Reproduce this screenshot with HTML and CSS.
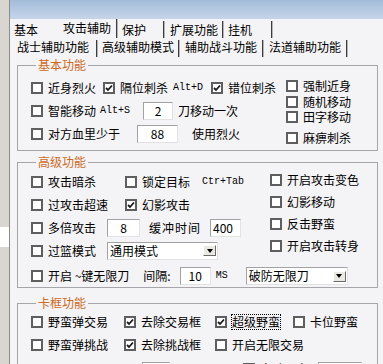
FILE: index.html
```html
<!DOCTYPE html>
<html lang="zh-CN">
<head>
    <meta charset="UTF-8">
    <title>攻击辅助</title>
    <link rel="stylesheet" href="styles.css">
</head>
<body>
    <div class="window">
        <div class="side">
            <div class="side-hole"></div>
        </div>
        <div class="main">
            <div class="titlebar"></div>

            <div class="tabs tabs-top">
                <span class="tab t1">基本</span>
                <span class="tab t2 active">攻击辅助</span>
                <span class="tab t3">保护</span>
                <span class="tab t4">扩展功能</span>
                <span class="tab t5">挂机</span>
            </div>

            <div class="tabs tabs-sub">
                <span class="tab active">战士辅助功能</span>
                <span class="tab">高级辅助模式</span>
                <span class="tab">辅助战斗功能</span>
                <span class="tab">法道辅助功能</span>
            </div>

            <div class="panel">
                <!-- 基本功能 -->
                <fieldset class="group basic">
                    <legend>基本功能</legend>
                    <div class="group-body">
                        <div class="rows">
                            <div class="row">
                                <label class="chk col-a"><span class="box"></span>近身烈火</label>
                                <span class="col-b">
                                    <label class="chk"><span class="box on"><svg viewBox="0 0 8 8"><polyline points="1,4 3,6 7,1.5"/></svg></span>隔位刺杀</label>
                                    <span class="key">Alt+D</span>
                                </span>
                                <label class="chk"><span class="box on"><svg viewBox="0 0 8 8"><polyline points="1,4 3,6 7,1.5"/></svg></span>错位刺杀</label>
                            </div>
                            <div class="row">
                                <label class="chk"><span class="box"></span>智能移动</label>
                                <span class="key alt-s">Alt+S</span>
                                <span class="num n-step">2</span>
                                <span class="txt t-step">刀移动一次</span>
                            </div>
                            <div class="row">
                                <label class="chk"><span class="box"></span>对方血里少于</label>
                                <span class="num n-hp">88</span>
                                <span class="txt t-hp">使用烈火</span>
                            </div>
                        </div>
                        <div class="side-col">
                            <label class="chk"><span class="box"></span>强制近身</label>
                            <label class="chk s2"><span class="box"></span>随机移动</label>
                            <label class="chk s3"><span class="box"></span>田字移动</label>
                            <label class="chk s4"><span class="box"></span>麻痹刺杀</label>
                        </div>
                    </div>
                </fieldset>

                <!-- 高级功能 -->
                <fieldset class="group adv">
                    <legend>高级功能</legend>
                    <div class="group-body">
                        <div class="rows">
                            <div class="row">
                                <label class="chk col-a"><span class="box"></span>攻击暗杀</label>
                                <label class="chk"><span class="box"></span>锁定目标</label>
                                <span class="key ctr-tab">Ctr+Tab</span>
                            </div>
                            <div class="row">
                                <label class="chk col-a"><span class="box"></span>过攻击超速</label>
                                <label class="chk"><span class="box on"><svg viewBox="0 0 8 8"><polyline points="1,4 3,6 7,1.5"/></svg></span>幻影攻击</label>
                            </div>
                            <div class="row">
                                <label class="chk"><span class="box"></span>多倍攻击</label>
                                <span class="num n-mult">8</span>
                                <span class="txt t-buf">缓冲时间</span>
                                <span class="num n-buf">400</span>
                            </div>
                            <div class="row">
                                <label class="chk"><span class="box"></span>过篮模式</label>
                                <span class="combo c-mode">通用模式<span class="arrow"></span></span>
                            </div>
                        </div>
                        <div class="side-col">
                            <label class="chk"><span class="box"></span>开启攻击变色</label>
                            <label class="chk"><span class="box"></span>幻影移动</label>
                            <label class="chk"><span class="box"></span>反击野蛮</label>
                            <label class="chk"><span class="box"></span>开启攻击转身</label>
                        </div>
                    </div>
                    <div class="row last">
                        <label class="chk"><span class="box"></span>开启 ~键无限刀</label>
                        <span class="txt t-gap">间隔:</span>
                        <span class="num n-gap">10</span>
                        <span class="key ms">MS</span>
                        <span class="combo c-blade">破防无限刀<span class="arrow"></span></span>
                    </div>
                </fieldset>

                <!-- 卡框功能 -->
                <fieldset class="group card">
                    <legend>卡框功能</legend>
                    <div class="row">
                        <label class="chk col-a"><span class="box"></span>野蛮弹交易</label>
                        <label class="chk col-b"><span class="box on"><svg viewBox="0 0 8 8"><polyline points="1,4 3,6 7,1.5"/></svg></span>去除交易框</label>
                        <label class="chk col-c"><span class="box on"><svg viewBox="0 0 8 8"><polyline points="1,4 3,6 7,1.5"/></svg></span><span class="focus">超级野蛮</span></label>
                        <label class="chk"><span class="box"></span>卡位野蛮</label>
                    </div>
                    <div class="row">
                        <label class="chk col-a"><span class="box"></span>野蛮弹挑战</label>
                        <label class="chk col-b"><span class="box on"><svg viewBox="0 0 8 8"><polyline points="1,4 3,6 7,1.5"/></svg></span>去除挑战框</label>
                        <label class="chk col-c"><span class="box"></span>开启无限交易</label>
                    </div>
                    <div class="row partial">
                        <span class="num n-low"></span>
                        <label class="chk c-low"><span class="box dark"></span>自动野蛮</label>
                        <span class="num n-low2"></span>
                    </div>
                </fieldset>
            </div>
        </div>
    </div>
</body>
</html>
```

FILE: styles.css
```css
html, body {
    margin: 0;
    width: 383px;
    height: 364px;
    overflow: hidden;
}

body {
    font-family: "Noto Sans CJK SC", "Noto Sans", sans-serif;
    font-size: 12px;
    line-height: 14px;
    color: #000;
    background: #f4f3f5;
}

.window {
    display: flex;
    height: 364px;
    overflow: hidden;
}

.side {
    width: 9px;
    background: #d9d6d1;
    border-right: 1px solid #8e8c88;
    display: flex;
    flex-direction: column;
}

.side-hole {
    margin-top: 227px;
    height: 20px;
    background: #fff;
}

.main {
    flex: 1;
    background: #f4f3f5;
}

.titlebar {
    height: 19px;
    background: linear-gradient(#a4bcd9, #c5d5e8);
}

/* tabs */
.tabs {
    display: flex;
    height: 19px;
}

.tab {
    box-sizing: border-box;
    height: 17px;
    white-space: nowrap;
}

.tabs-top .tab {
    margin-top: 2px;
    padding-top: 2px;
    border-right: 1px solid #3c3c3c;
    box-shadow: 1px 0 0 #b4b4b4;
}

.tabs-top .tab.active {
    margin-top: 0;
    height: 19px;
    padding-top: 2px;
}

.tabs-top .t1 { width: 45px; padding-left: 4px; border-right: none; box-shadow: none; }
.tabs-top .t2 { width: 62px; padding-left: 8px; }
.tabs-top .t3 { width: 47px; padding-left: 5px; }
.tabs-top .t4 { width: 59px; padding-left: 6px; }
.tabs-top .t5 { width: 49px; padding-left: 5px; }

.tabs-sub .tab {
    width: 84px;
    margin-top: 2px;
    padding-left: 6px;
    border-right: 1px solid #3c3c3c;
    box-shadow: 1px 0 0 #b4b4b4;
}

.tabs-sub .tab:first-child {
    width: 87px;
    padding-left: 7px;
}

.tabs-sub .tab:nth-child(2) {
    width: 82px;
    padding-left: 5px;
}

/* groups */
.panel {
    padding-top: 2px;
}

.group {
    margin: 0 5px 0 7px;
    padding: 5px 0 5px 13px;
    border: 1px solid #a6a5a9;
    min-width: 0;
}

.group legend {
    margin-left: 5px;
    padding: 0 2px;
    line-height: 12px;
    color: #cc6a24;
}

.group.adv {
    margin-top: 5px;
    padding: 2px 0 1px 13px;
}

.group.card {
    margin-top: 9px;
    padding: 1px 0 0 13px;
}

.group-body {
    display: flex;
}

.row {
    display: flex;
    align-items: center;
    height: 23px;
    white-space: nowrap;
}

.side-col {
    display: flex;
    flex-direction: column;
}

.side-col .chk {
    height: 14px;
}

/* checkbox */
.chk {
    display: flex;
    align-items: center;
    gap: 5px;
    flex-shrink: 0;
}

.box {
    box-sizing: border-box;
    flex-shrink: 0;
    width: 12px;
    height: 12px;
    border: 2px solid #5e5e5e;
    background: #fff;
    display: flex;
    align-items: center;
    justify-content: center;
}

.box svg {
    width: 8px;
    height: 8px;
    fill: none;
    stroke: #1a1a1a;
    stroke-width: 1.8;
}

.box.dark {
    background: #5e5e5e;
}

.focus {
    outline: 1px dotted #000;
}

.key {
    font-family: "Liberation Mono", "DejaVu Sans Mono", monospace;
    font-size: 10px;
}

.num {
    box-sizing: border-box;
    flex-shrink: 0;
    height: 18px;
    background: #fff;
    border: 1px solid;
    border-color: #a2a2a2 #e2e2e2 #e2e2e2 #a2a2a2;
    text-align: center;
    line-height: 16px;
}

.combo {
    box-sizing: border-box;
    flex-shrink: 0;
    display: flex;
    align-items: center;
    justify-content: space-between;
    height: 18px;
    padding-left: 2px;
    background: #fff;
    border: 1px solid;
    border-color: #a2a2a2 #e2e2e2 #e2e2e2 #a2a2a2;
}

.combo .arrow {
    box-sizing: border-box;
    width: 13px;
    height: 11px;
    margin-right: 1px;
    background: #ece9e4;
    border: 1px solid;
    border-color: #fff #6a6a6a #6a6a6a #fff;
    display: flex;
    align-items: center;
    justify-content: center;
}

.combo .arrow::after {
    content: "";
    border-left: 3px solid transparent;
    border-right: 3px solid transparent;
    border-top: 4px solid #000;
}

/* 基本功能 */
.basic .rows { width: 255px; flex-shrink: 0; }
.basic .col-a { width: 72px; }
.basic .col-b { width: 108px; display: flex; align-items: center; }
.basic .col-b .key { margin-left: 5px; }
.basic .side-col { padding-top: 3px; }
.basic .side-col .s2 { margin-top: 2px; }
.basic .side-col .s3 { margin-top: 1px; }
.basic .side-col .s4 { margin-top: 7px; }

.alt-s { margin-left: 4px; }
.n-step { width: 30px; margin-left: 13px; }
.t-step { margin-left: 5px; }
.n-hp { width: 41px; margin-left: 17px; }
.t-hp { margin-left: 14px; }

/* 高级功能 */
.adv .rows { width: 239px; flex-shrink: 0; }
.adv .col-a { width: 94px; }
.adv .side-col { padding-top: 3px; gap: 8px; }

.ctr-tab { margin-left: 12px; }
.n-mult { width: 33px; margin-left: 11px; }
.t-buf { margin-left: 9px; letter-spacing: 1px; }
.n-buf { width: 31px; margin-left: 9px; text-align: left; padding-left: 2px; }
.c-mode { width: 111px; margin-left: 11px; }

.row.last {
    height: 20px;
    margin-top: 4px;
}

.t-gap { margin-left: 14px; }
.n-gap { width: 31px; margin-left: 9px; }
.ms { margin-left: 5px; }
.c-blade { width: 102px; margin-left: 18px; }

/* 卡框功能 */
.card .col-a { width: 93px; }
.card .col-b { width: 91px; }
.card .col-c { width: 78px; }

.row.partial {
    align-items: flex-start;
    padding-top: 6px;
    box-sizing: border-box;
}

.n-low { width: 28px; margin-left: 111px; }
.c-low { margin-left: 73px; }
.n-low2 { width: 44px; margin-left: 10px; }
```
